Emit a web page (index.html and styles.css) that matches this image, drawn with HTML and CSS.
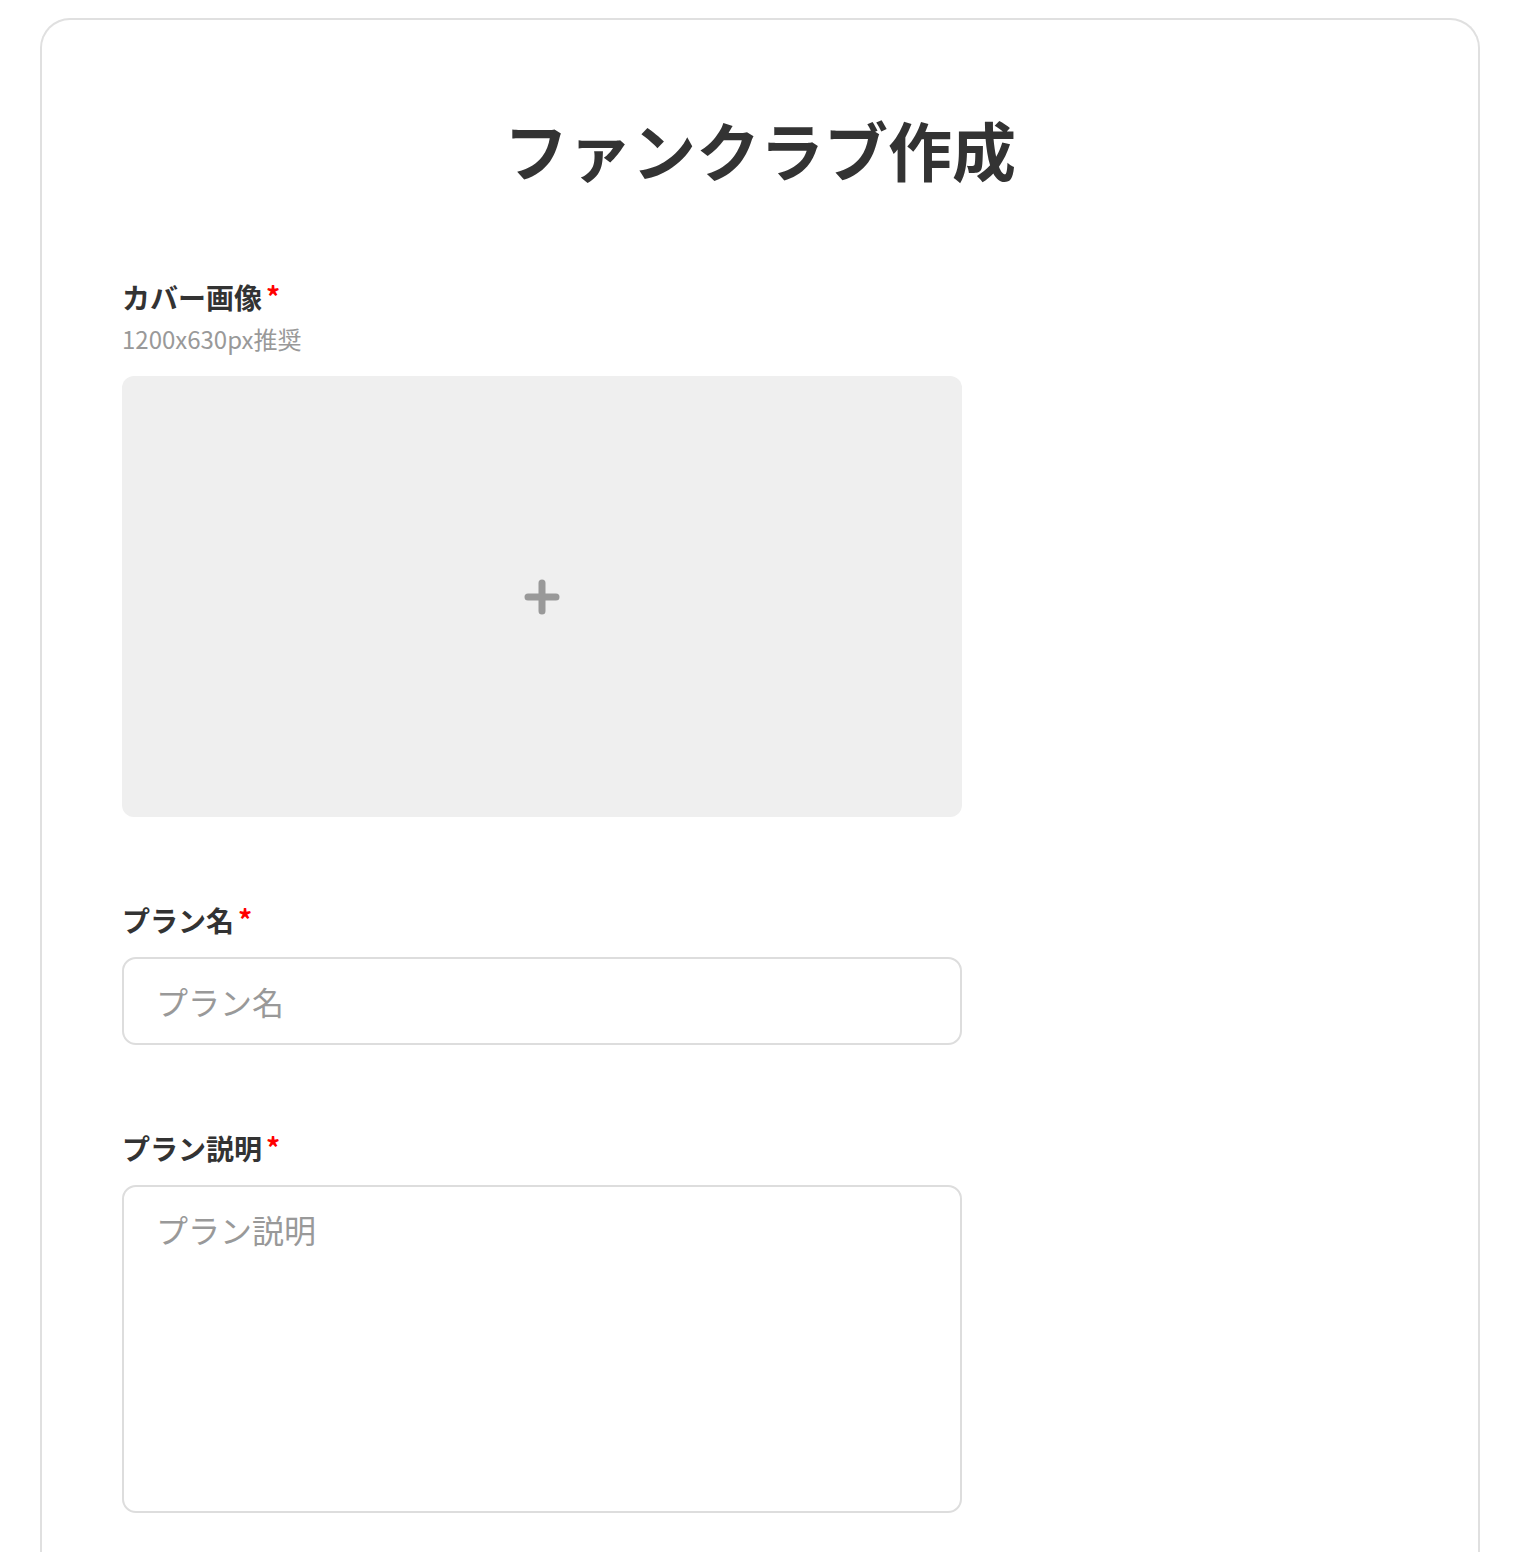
FILE: index.html
```html
<!DOCTYPE html>
<html lang="ja">
<head>
	<meta charset="utf-8">
	<title>ファンクラブ作成</title>
	<link rel="stylesheet" href="styles.css">
</head>
<body>
	<div class="card">
		<h1 class="title">ファンクラブ作成</h1>

		<div class="field">
			<label class="label">カバー画像<span class="required">*</span></label>
			<p class="hint">1200x630px推奨</p>
			<div class="cover">
				<svg class="plus" width="36" height="36" viewBox="0 0 36 36">
					<path d="M18 4 V32 M4 18 H32" stroke="#999" stroke-width="7" stroke-linecap="round" fill="none"/>
				</svg>
			</div>
		</div>

		<div class="field">
			<label class="label" for="plan-name">プラン名<span class="required">*</span></label>
			<input class="input" type="text" id="plan-name" placeholder="プラン名">
		</div>

		<div class="field">
			<label class="label" for="plan-desc">プラン説明<span class="required">*</span></label>
			<textarea class="input textarea" id="plan-desc" placeholder="プラン説明"></textarea>
		</div>
	</div>
</body>
</html>
```

FILE: styles.css
```css
body {
	margin: 0;
	padding: 18px 40px 0;
	background-color: #fff;
	color: #333;
	font-family: "Noto Sans CJK JP", "Noto Sans", sans-serif;
}

.card {
	box-sizing: border-box;
	width: 1440px;
	height: 1534px;
	overflow: hidden;
	border: 2px solid #e0e0e0;
	border-bottom: none;
	border-radius: 30px 30px 0 0;
	padding: 80px;
}

.title {
	margin: 0 0 80px;
	font-size: 64px;
	line-height: 96px;
	font-weight: 700;
	text-align: center;
}

.field {
	margin-bottom: 82px;
	width: 840px;
}

.label {
	display: block;
	font-size: 28px;
	line-height: 42px;
	font-weight: 700;
	margin-bottom: 16px;
}

.required {
	color: #f00;
	font-size: 28px;
	font-weight: 700;
	vertical-align: top;
	margin-left: 4px;
	position: relative;
	top: -1px;
}

.hint {
	margin: -13px 0 19px;
	font-size: 24px;
	line-height: 36px;
	color: #999;
}

.cover {
	aspect-ratio: 1200 / 630;
	background-color: #efefef;
	border-radius: 12px;
	display: flex;
	align-items: center;
	justify-content: center;
}

.input {
	display: block;
	box-sizing: border-box;
	width: 100%;
	height: 88px;
	padding: 0 32px;
	border: 2px solid #ddd;
	border-radius: 14px;
	font-family: inherit;
	font-size: 32px;
	color: #333;
	outline: none;
}

.input::placeholder {
	color: #999;
}

.textarea {
	height: 328px;
	padding: 18px 32px;
	line-height: 48px;
	resize: none;
}
```
